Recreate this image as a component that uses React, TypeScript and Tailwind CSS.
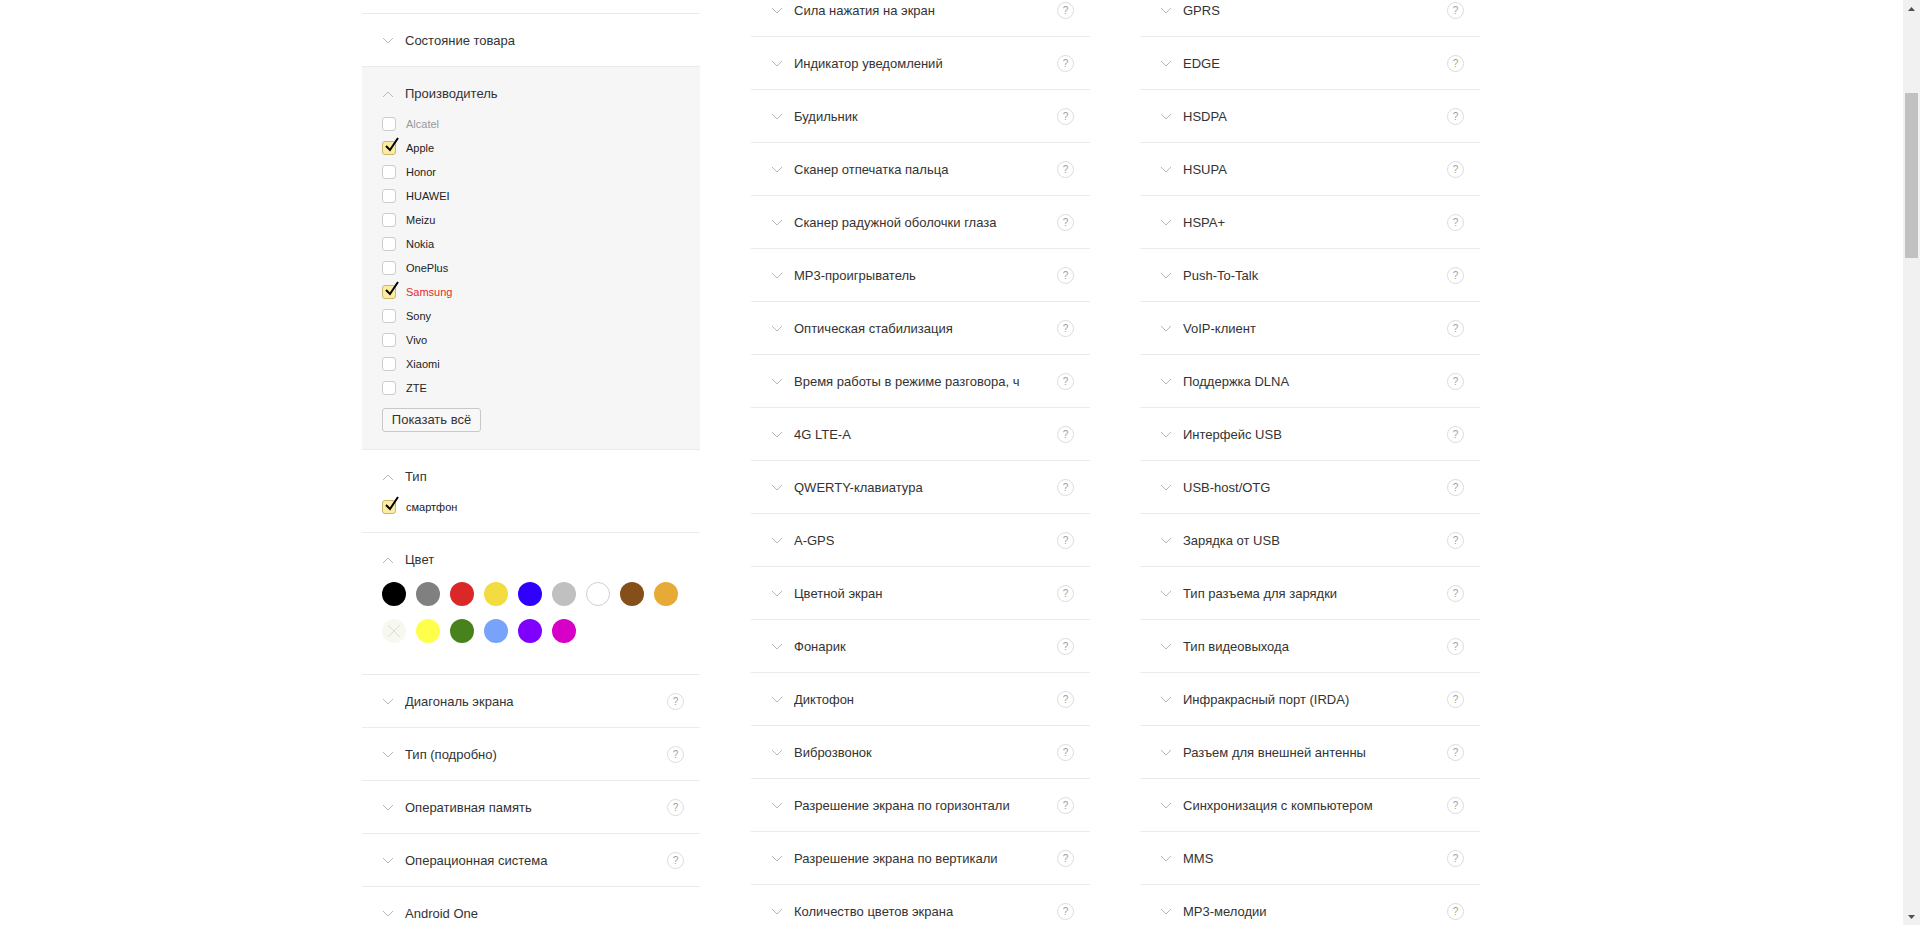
const middleItems = [
  "Сила нажатия на экран",
  "Индикатор уведомлений",
  "Будильник",
  "Сканер отпечатка пальца",
  "Сканер радужной оболочки глаза",
  "MP3-проигрыватель",
  "Оптическая стабилизация",
  "Время работы в режиме разговора, ч",
  "4G LTE-A",
  "QWERTY-клавиатура",
  "A-GPS",
  "Цветной экран",
  "Фонарик",
  "Диктофон",
  "Виброзвонок",
  "Разрешение экрана по горизонтали",
  "Разрешение экрана по вертикали",
  "Количество цветов экрана",
];

const rightItems = [
  "GPRS",
  "EDGE",
  "HSDPA",
  "HSUPA",
  "HSPA+",
  "Push-To-Talk",
  "VoIP-клиент",
  "Поддержка DLNA",
  "Интерфейс USB",
  "USB-host/OTG",
  "Зарядка от USB",
  "Тип разъема для зарядки",
  "Тип видеовыхода",
  "Инфракрасный порт (IRDA)",
  "Разъем для внешней антенны",
  "Синхронизация с компьютером",
  "MMS",
  "MP3-мелодии",
];

const vendors: { name: string; checked?: boolean; tone?: "muted" | "red" }[] = [
  { name: "Alcatel", tone: "muted" },
  { name: "Apple", checked: true },
  { name: "Honor" },
  { name: "HUAWEI" },
  { name: "Meizu" },
  { name: "Nokia" },
  { name: "OnePlus" },
  { name: "Samsung", checked: true, tone: "red" },
  { name: "Sony" },
  { name: "Vivo" },
  { name: "Xiaomi" },
  { name: "ZTE" },
];

const colors = [
  "bg-[#000000]",
  "bg-[#808080]",
  "bg-[#da2727]",
  "bg-[#f3dc40]",
  "bg-[#3000fd]",
  "bg-[#c0c0c0]",
  "bg-white border border-[#cfcfcf]",
  "bg-[#854f19]",
  "bg-[#e7aa37]",
  "crossed",
  "bg-[#fdff4a]",
  "bg-[#47821c]",
  "bg-[#77a3fa]",
  "bg-[#8000fe]",
  "bg-[#d600c6]",
];

function Chevron({ up = false }: { up?: boolean }) {
  return (
    <svg width="12" height="7" viewBox="0 0 12 7" className="shrink-0">
      <polyline
        points={up ? "1,6 6,1 11,6" : "1,1 6,6 11,1"}
        fill="none"
        stroke="#b8b8b8"
        strokeWidth="1"
      />
    </svg>
  );
}

function Hint() {
  return (
    <span className="flex h-[17px] w-[17px] shrink-0 items-center justify-center rounded-full border border-[#dcdcdc] text-[10px] leading-none text-[#a0a0a0]">
      ?
    </span>
  );
}

function FilterRow({ title, hint = true }: { title: string; hint?: boolean }) {
  return (
    <div className="flex h-[53px] items-center border-b border-[#ebebeb] pl-[20px] pr-[16px] pt-[1px]">
      <Chevron />
      <span className="ml-[11px] flex-1 truncate text-[13px] text-[#333]">{title}</span>
      {hint && <Hint />}
    </div>
  );
}

function Checkbox({ checked }: { checked?: boolean }) {
  return (
    <span
      className={`relative h-[14px] w-[14px] shrink-0 rounded-[3px] border ${
        checked ? "border-[#c9b86a] bg-[#fbeba3]" : "border-[#cdcdcd] bg-white"
      }`}>
      {checked && (
        <svg
          width="16"
          height="16"
          viewBox="0 0 16 16"
          className="absolute left-[1px] top-[-5px]">
          <path d="M2 9 L6 13 L14 1" fill="none" stroke="#000" strokeWidth="2" />
        </svg>
      )}
    </span>
  );
}

function CheckItem({
  label,
  checked,
  tone,
}: {
  label: string;
  checked?: boolean;
  tone?: "muted" | "red";
}) {
  const color =
    tone === "muted" ? "text-[#999]" : tone === "red" ? "text-[#e52b2b]" : "text-[#222]";
  return (
    <label className="flex h-[24px] items-center">
      <Checkbox checked={checked} />
      <span className={`ml-[10px] text-[11px] ${color}`}>{label}</span>
    </label>
  );
}

function SectionHead({ title }: { title: string }) {
  return (
    <div className="flex h-[20px] items-center">
      <Chevron up />
      <span className="ml-[11px] text-[13px] text-[#333]">{title}</span>
    </div>
  );
}

function LeftColumn() {
  return (
    <div className="mt-[13px] w-[338px] shrink-0 border-t border-[#ebebeb]">
      <FilterRow title="Состояние товара" hint={false} />

      <section className="border-b border-[#ebebeb] bg-[#f6f6f6] pb-[17px] pl-[20px] pt-[17px]">
        <SectionHead title="Производитель" />
        <div className="mt-[8px] flex flex-col">
          {vendors.map((v) => (
            <CheckItem key={v.name} label={v.name} checked={v.checked} tone={v.tone} />
          ))}
        </div>
        <button
          type="button"
          className="mt-[8px] flex h-[24px] w-[99px] items-center justify-center rounded-[3px] border border-[#c8c8c8] bg-[#f8f8f8] text-[13px] text-[#333]">
          Показать всё
        </button>
      </section>

      <section className="border-b border-[#ebebeb] pb-[13px] pl-[20px] pt-[17px]">
        <SectionHead title="Тип" />
        <div className="mt-[8px]">
          <CheckItem label="смартфон" checked />
        </div>
      </section>

      <section className="border-b border-[#ebebeb] pb-[31px] pl-[20px] pt-[17px]">
        <SectionHead title="Цвет" />
        <div className="mt-[12px] flex w-[300px] flex-wrap gap-x-[10px] gap-y-[13px]">
          {colors.map((c, i) =>
            c === "crossed" ? (
              <span
                key={i}
                className="flex h-[24px] w-[24px] items-center justify-center rounded-full bg-[#f7f8ef]">
                <svg width="14" height="14" viewBox="0 0 14 14">
                  <path d="M1 1 L13 13 M13 1 L1 13" stroke="#dadada" strokeWidth="1" />
                </svg>
              </span>
            ) : (
              <span key={i} className={`h-[24px] w-[24px] rounded-full ${c}`} />
            ),
          )}
        </div>
      </section>

      <FilterRow title="Диагональ экрана" />
      <FilterRow title="Тип (подробно)" />
      <FilterRow title="Оперативная память" />
      <FilterRow title="Операционная система" />
      <FilterRow title="Android One" hint={false} />
    </div>
  );
}

function Scrollbar() {
  return (
    <div className="flex w-[17px] shrink-0 flex-col bg-[#f1f1f1]">
      <div className="flex h-[17px] items-center justify-center">
        <svg width="7" height="4" viewBox="0 0 7 4">
          <polygon points="0,4 3.5,0 7,4" fill="#505050" />
        </svg>
      </div>
      <div className="h-[76px]" />
      <div className="mx-[2px] h-[165px] bg-[#c1c1c1]" />
      <div className="flex-1" />
      <div className="flex h-[17px] items-center justify-center">
        <svg width="7" height="4" viewBox="0 0 7 4">
          <polygon points="0,0 3.5,4 7,0" fill="#505050" />
        </svg>
      </div>
    </div>
  );
}

export default function App() {
  return (
    <div className="flex h-[925px] w-full overflow-hidden bg-white font-['Liberation_Sans',Arial,sans-serif]">
      <main className="flex flex-1 items-start pl-[362px]">
        <LeftColumn />
        <div className="-mt-[16px] ml-[51px] w-[339px] shrink-0">
          {middleItems.map((t) => (
            <FilterRow key={t} title={t} />
          ))}
        </div>
        <div className="-mt-[16px] ml-[50px] w-[340px] shrink-0">
          {rightItems.map((t) => (
            <FilterRow key={t} title={t} />
          ))}
        </div>
      </main>
      <Scrollbar />
    </div>
  );
}
